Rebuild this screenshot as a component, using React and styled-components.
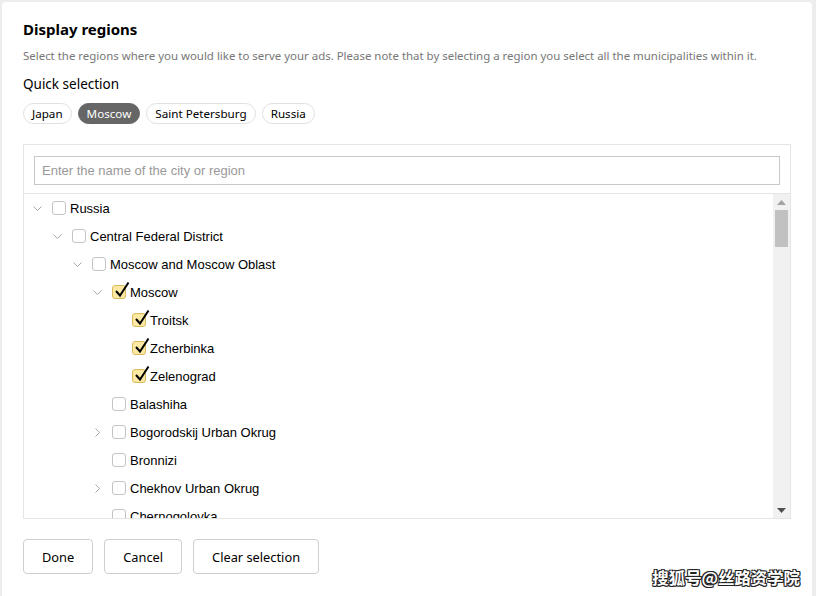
import React from "react";
import styled, { createGlobalStyle } from "styled-components";

const Global = createGlobalStyle`
  html, body { margin: 0; padding: 0; background: #ededed; }
  body { width: 816px; height: 596px; overflow: hidden; font-family: "Noto Sans", "Open Sans", sans-serif; }
`;

const Page = styled.div`
  height: 596px;
  padding: 2px 4px 0 2px;
  box-sizing: border-box;
  display: flex;
`;

const Card = styled.div`
  flex: 1;
  background: #fff;
  border-radius: 4px 4px 0 0;
  padding: 17px 21px 0 21px;
  display: flex;
  flex-direction: column;
  position: relative;
`;

const Title = styled.h2`
  margin: 0;
  font-size: 15px;
  line-height: 20px;
  font-weight: 700;
  color: #000;
`;

const Description = styled.p`
  margin: 7px 0 0;
  font-size: 11.45px;
  line-height: 20px;
  color: #777;
`;

const Label = styled.div`
  margin-top: 8px;
  font-size: 13.5px;
  line-height: 20px;
  color: #000;
`;

const Chips = styled.div`
  display: flex;
  gap: 6px;
  margin-top: 9px;
`;

const Chip = styled.span`
  height: 21px;
  box-sizing: border-box;
  padding: 0 8px;
  border-radius: 11px;
  border: 1px solid ${(p) => (p.$active ? "#666" : "#e0e0e0")};
  background: ${(p) => (p.$active ? "#666" : "#fff")};
  color: ${(p) => (p.$active ? "#fff" : "#000")};
  font-size: 11.65px;
  line-height: 19px;
  display: inline-flex;
  align-items: center;
`;

const TreeBox = styled.div`
  margin-top: 20px;
  width: 768px;
  height: 375px;
  box-sizing: border-box;
  border: 1px solid #e5e5e5;
  display: flex;
  flex-direction: column;
`;

const SearchArea = styled.div`
  padding: 11px 10px 8px 10px;
  border-bottom: 1px solid #e5e5e5;
`;

const SearchInput = styled.input`
  width: 100%;
  height: 29px;
  box-sizing: border-box;
  border: 1px solid #c8c8c8;
  padding: 0 7px;
  font-family: "Liberation Sans", Arial, sans-serif;
  font-size: 13px;
  color: #000;
  outline: none;
  &::placeholder { color: #999; }
`;

const TreeBody = styled.div`
  flex: 1;
  display: flex;
  min-height: 0;
`;

const List = styled.div`
  flex: 1;
  overflow: hidden;
`;

const Row = styled.div`
  height: 28px;
  display: flex;
  align-items: center;
  padding-left: ${(p) => 8 + p.$level * 20}px;
  font-family: "Liberation Sans", Arial, sans-serif;
  font-size: 13px;
  color: #000;
  white-space: nowrap;
`;

const Toggle = styled.span`
  width: 11px;
  height: 14px;
  margin-right: 9px;
  display: inline-flex;
  align-items: center;
  justify-content: center;
`;

const Box = styled.span`
  width: 14px;
  height: 14px;
  box-sizing: border-box;
  border-radius: 3px;
  border: 1px solid ${(p) => (p.$checked ? "#d9b95c" : "#c4c4c4")};
  background: ${(p) => (p.$checked ? "#fde9a4" : "#fff")};
  margin-right: 4px;
  position: relative;
  flex-shrink: 0;
`;

const Tick = styled.svg`
  position: absolute;
  left: 1px;
  top: -5px;
  width: 16px;
  height: 17px;
`;

const Scrollbar = styled.div`
  width: 17px;
  background: #f1f1f1;
  display: flex;
  flex-direction: column;
  align-items: center;
`;

const Arrow = styled.div`
  height: 16px;
  display: flex;
  align-items: center;
  justify-content: center;
`;

const Thumb = styled.div`
  width: 13px;
  height: 37px;
  background: #c1c1c1;
`;

const Track = styled.div`
  flex: 1;
`;

const Buttons = styled.div`
  display: flex;
  gap: 11px;
  margin-top: 20px;
`;

const Button = styled.button`
  height: 35px;
  box-sizing: border-box;
  padding: 0 18px;
  border: 1px solid #cfcfcf;
  border-radius: 4px;
  background: #fff;
  font-family: "Noto Sans", "Open Sans", sans-serif;
  font-size: 12.8px;
  color: #000;
`;

const Watermark = styled.div`
  position: absolute;
  right: 12px;
  bottom: 7px;
  font-family: "Noto Sans CJK SC", sans-serif;
  font-weight: 700;
  font-size: 16.4px;
  color: #fff;
  text-shadow: 1px 1px 0 #222, -1px -1px 0 #222, 1px -1px 0 #222, -1px 1px 0 #222, 0 1px 0 #222, 1px 0 0 #222;
`;

const Chevron = ({ dir }) => (
  <svg width="11" height="11" viewBox="0 0 11 11">
    {dir === "down" ? (
      <path d="M1.5 3.5 L5.5 7.5 L9.5 3.5" fill="none" stroke="#a8a8a8" strokeWidth="1" />
    ) : (
      <path d="M3.5 1.5 L7.5 5.5 L3.5 9.5" fill="none" stroke="#a8a8a8" strokeWidth="1" />
    )}
  </svg>
);

const rows = [
  { level: 0, label: "Russia", toggle: "down" },
  { level: 1, label: "Central Federal District", toggle: "down" },
  { level: 2, label: "Moscow and Moscow Oblast", toggle: "down" },
  { level: 3, label: "Moscow", toggle: "down", checked: true },
  { level: 4, label: "Troitsk", checked: true },
  { level: 4, label: "Zcherbinka", checked: true },
  { level: 4, label: "Zelenograd", checked: true },
  { level: 3, label: "Balashiha" },
  { level: 3, label: "Bogorodskij Urban Okrug", toggle: "right" },
  { level: 3, label: "Bronnizi" },
  { level: 3, label: "Chekhov Urban Okrug", toggle: "right" },
  { level: 3, label: "Chernogolovka" },
];

export default function App() {
  return (
    <>
      <Global />
      <Page>
        <Card>
          <Title>Display regions</Title>
          <Description>
            Select the regions where you would like to serve your ads. Please note that by selecting a region you select all the municipalities within it.
          </Description>
          <Label>Quick selection</Label>
          <Chips>
            <Chip>Japan</Chip>
            <Chip $active>Moscow</Chip>
            <Chip>Saint Petersburg</Chip>
            <Chip>Russia</Chip>
          </Chips>
          <TreeBox>
            <SearchArea>
              <SearchInput placeholder="Enter the name of the city or region" />
            </SearchArea>
            <TreeBody>
              <List>
                {rows.map((r, i) => (
                  <Row key={i} $level={r.level}>
                    <Toggle>{r.toggle && <Chevron dir={r.toggle} />}</Toggle>
                    <Box $checked={r.checked}>
                      {r.checked && (
                        <Tick viewBox="0 0 16 17">
                          <path d="M2 10 L6 14.5 L14.5 1.5" fill="none" stroke="#000" strokeWidth="2" />
                        </Tick>
                      )}
                    </Box>
                    {r.label}
                  </Row>
                ))}
              </List>
              <Scrollbar>
                <Arrow>
                  <svg width="9" height="5" viewBox="0 0 9 5"><path d="M0 5 L4.5 0 L9 5 Z" fill="#a3a3a3" /></svg>
                </Arrow>
                <Thumb />
                <Track />
                <Arrow>
                  <svg width="9" height="5" viewBox="0 0 9 5"><path d="M0 0 L4.5 5 L9 0 Z" fill="#505050" /></svg>
                </Arrow>
              </Scrollbar>
            </TreeBody>
          </TreeBox>
          <Buttons>
            <Button>Done</Button>
            <Button>Cancel</Button>
            <Button>Clear selection</Button>
          </Buttons>
          <Watermark>搜狐号@丝路资学院</Watermark>
        </Card>
      </Page>
    </>
  );
}
